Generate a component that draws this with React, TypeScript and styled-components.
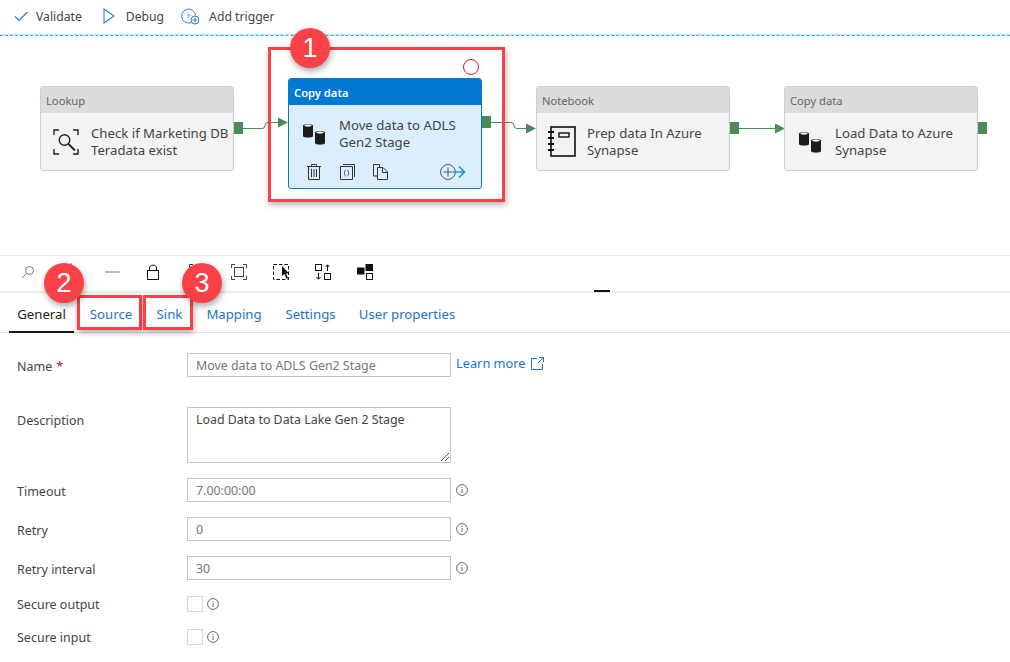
import React from 'react';
import styled, { createGlobalStyle } from 'styled-components';

const GlobalStyle = createGlobalStyle`
  html, body {
    margin: 0;
    padding: 0;
    background: #fff;
  }
  * {
    box-sizing: border-box;
  }
`;

const Page = styled.div`
  position: relative;
  width: 1010px;
  height: 662px;
  overflow: hidden;
  background: #fff;
  color: #333;
  font-family: 'Noto Sans', 'Open Sans', sans-serif;
  font-size: 12.5px;
`;

const TopBar = styled.div`
  display: flex;
  align-items: center;
  height: 36px;
  padding: 0 0 3px 14px;
  border-bottom: 1px dashed #12bce8;
  box-shadow: inset 0 -1px 0 #dedede;
`;

const TopAction = styled.div<{ $gap: number; $mr: number }>`
  display: flex;
  align-items: center;
  gap: ${(p) => p.$gap}px;
  margin-right: ${(p) => p.$mr}px;
  font-size: 12.2px;
  color: #444;
`;

const Canvas = styled.div`
  position: relative;
  height: 220px;
  border-bottom: 1px solid #e6e6e6;
`;

const Wires = styled.svg`
  position: absolute;
  left: 0;
  top: 0;
`;

const Node = styled.div<{ $x: number; $y: number; $active?: boolean }>`
  position: absolute;
  left: ${(p) => p.$x}px;
  top: ${(p) => p.$y}px;
  width: 194px;
  height: ${(p) => (p.$active ? 111 : 85)}px;
  border: 1px solid ${(p) => (p.$active ? '#0f78b8' : '#cfcfcf')};
  border-radius: 3px;
  background: ${(p) => (p.$active ? '#daeefd' : '#f3f3f3')};
  overflow: hidden;
`;

const NodeHead = styled.div<{ $active?: boolean }>`
  height: 26px;
  padding-left: 5px;
  line-height: 27px;
  font-size: 11.2px;
  font-weight: ${(p) => (p.$active ? 600 : 400)};
  background: ${(p) => (p.$active ? '#0078d4' : '#dcdcdc')};
  color: ${(p) => (p.$active ? '#fff' : '#666')};
`;

const NodeBody = styled.div`
  display: flex;
  align-items: flex-start;
`;

const NodeIcon = styled.div`
  flex: none;
  width: 50px;
  height: 44px;
  margin-top: 7px;
  display: flex;
  align-items: center;
  justify-content: center;
`;

const NodeText = styled.div`
  margin-top: 12px;
  font-size: 13.2px;
  line-height: 17px;
  color: #444;
  white-space: nowrap;
`;

const NodeTools = styled.div`
  display: flex;
  align-items: center;
  padding-left: 18px;
  margin-top: 6px;
`;

const NodeTool = styled.div`
  width: 33px;
  height: 20px;
  display: flex;
  align-items: center;
`;

const NodeToolEnd = styled.div`
  margin-left: 34px;
  display: flex;
  align-items: center;
`;

const OutPort = styled.div<{ $x: number; $y: number }>`
  position: absolute;
  left: ${(p) => p.$x}px;
  top: ${(p) => p.$y}px;
  width: 9px;
  height: 12px;
  background: #4a8c55;
`;

const ErrorRing = styled.div`
  position: absolute;
  left: 463px;
  top: 59px;
  width: 16px;
  height: 16px;
  border: 1px solid #e81123;
  border-radius: 50%;
`;

const ZoomBar = styled.div`
  position: relative;
  display: flex;
  align-items: center;
  height: 37px;
  padding: 0 0 4px 21px;
  border-bottom: 2px solid #ececec;
`;

const ZoomTool = styled.div`
  width: 42px;
  display: flex;
  align-items: center;
`;

const GripMark = styled.div`
  position: absolute;
  left: 594px;
  bottom: -1px;
  width: 16px;
  height: 2px;
  background: #111;
`;

const Tabs = styled.div`
  display: flex;
  align-items: stretch;
  height: 40px;
  padding-left: 9px;
  border-bottom: 1px solid #e3e3e3;
`;

const Tab = styled.div<{ $active?: boolean; $width: number }>`
  width: ${(p) => p.$width}px;
  height: ${(p) => (p.$active ? 40 : 39)}px;
  line-height: 43px;
  text-align: center;
  font-size: 13.2px;
  white-space: nowrap;
  color: ${(p) => (p.$active ? '#222' : '#1a73cf')};
  border-bottom: ${(p) => (p.$active ? '2px solid #1b1b1b' : 'none')};
`;

const Form = styled.div`
  padding: 20px 0 0 17px;
`;

const Row = styled.div<{ $mb: number }>`
  display: flex;
  align-items: flex-start;
  margin-bottom: ${(p) => p.$mb}px;
`;

const Label = styled.div<{ $top?: number }>`
  flex: none;
  width: 170px;
  padding-top: ${(p) => p.$top ?? 5}px;
  line-height: 17px;
  font-size: 12.5px;
  color: #444;
`;

const Required = styled.span`
  color: #a4262c;
  margin-left: 4px;
`;

const Field = styled.div<{ $tall?: boolean; $dark?: boolean }>`
  position: relative;
  flex: none;
  width: 264px;
  height: ${(p) => (p.$tall ? 56 : 24)}px;
  padding: 3px 8px;
  line-height: 18px;
  font-size: 12.4px;
  border: 1px solid #c4c4c4;
  color: ${(p) => (p.$dark ? '#444' : '#777')};
`;

const Resize = styled.svg`
  position: absolute;
  right: 0;
  bottom: 0;
`;

const Hint = styled.div<{ $ml: number; $top: number }>`
  margin-left: ${(p) => p.$ml}px;
  margin-top: ${(p) => p.$top}px;
  display: flex;
  align-items: center;
  gap: 5px;
`;

const LearnMore = styled.span`
  color: #1a73cf;
  font-size: 12.8px;
  line-height: 16px;
`;

const Check = styled.div`
  flex: none;
  width: 16px;
  height: 16px;
  border: 1px solid #d8d8d8;
`;

const RedBox = styled.div<{ $x: number; $y: number; $w: number; $h: number }>`
  position: absolute;
  left: ${(p) => p.$x}px;
  top: ${(p) => p.$y}px;
  width: ${(p) => p.$w}px;
  height: ${(p) => p.$h}px;
  border: 3px solid #fa4147;
  box-shadow: 1px 3px 6px rgba(0, 0, 0, 0.3);
`;

const Badge = styled.div<{ $x: number; $y: number }>`
  position: absolute;
  left: ${(p) => p.$x - 20}px;
  top: ${(p) => p.$y - 20}px;
  width: 40px;
  height: 40px;
  border-radius: 50%;
  background: #fa4147;
  box-shadow: 1px 3px 6px rgba(0, 0, 0, 0.35);
  color: #fff;
  font-family: 'Liberation Sans', Arial, sans-serif;
  font-size: 27px;
  line-height: 40px;
  text-align: center;
`;

const Db = () => (
  <svg width="24" height="24" viewBox="0 0 24 24">
    <path d="M1 3.5C1 1.8 11 1.8 11 3.5V14C11 16 1 16 1 14Z" fill="#1c1c1c" />
    <ellipse cx="6" cy="3.6" rx="3.6" ry="1.1" fill="#eee" />
    <path d="M13 10.5C13 8.8 23 8.8 23 10.5V21C23 23 13 23 13 21Z" fill="#1c1c1c" />
    <ellipse cx="18" cy="10.6" rx="3.6" ry="1.1" fill="#eee" />
  </svg>
);

const LookupIcon = () => (
  <svg width="26" height="26" viewBox="0 0 26 26" fill="none" stroke="#222" strokeWidth="1.4">
    <path d="M1 6V1H6M20 1H25V6M1 20V25H6M20 25H25V20" />
    <circle cx="11.5" cy="11" r="5.3" />
    <path d="M15.5 15L22 21.5" strokeWidth="1.8" />
  </svg>
);

const NotebookIcon = () => (
  <svg width="28" height="32" viewBox="0 0 28 32" fill="none" stroke="#111">
    <rect x="3" y="1" width="24" height="29" strokeWidth="1.6" />
    <rect x="11" y="7" width="10" height="4" strokeWidth="1.4" />
    <path d="M0 6H6M0 12H6M0 18H6M0 24H6" strokeWidth="1.8" />
  </svg>
);

const TrashIcon = () => (
  <svg width="14" height="16" viewBox="0 0 14 16" fill="none" stroke="#333">
    <path d="M0 2.5H14M4.5 2.5V.5H9.5V2.5M1.5 2.5V15.5H12.5V2.5M4.5 5V13M7 5V13M9.5 5V13" />
  </svg>
);

const CodeIcon = () => (
  <svg width="15" height="16" viewBox="0 0 15 16" fill="none" stroke="#333">
    <path d="M3 .5H14.5V13M.5 2.5H12.5V15.5H.5Z" />
    <path d="M5.5 6C4.5 6 5 8.8 4 9C5 9.2 4.5 12 5.5 12M7.5 6C8.5 6 8 8.8 9 9C8 9.2 8.5 12 7.5 12" strokeWidth=".9" />
  </svg>
);

const CopyIcon = () => (
  <svg width="15" height="16" viewBox="0 0 15 16" fill="none" stroke="#333">
    <path d="M.5 .5H6.5V12H.5Z" fill="#daeefd" />
    <path d="M4.5 3.5H10L14.5 8V15.5H4.5Z" fill="#daeefd" />
    <path d="M9.5 3.5V8.5H14.5" />
  </svg>
);

const AddOutIcon = () => (
  <svg width="26" height="16" viewBox="0 0 26 16" fill="none">
    <circle cx="8" cy="8" r="7.4" stroke="#555" />
    <path d="M3.5 8H12.5M8 3.5V12.5" stroke="#555" />
    <path d="M13 8H24.5M19 2.5L24.5 8L19 13.5" stroke="#1a9ac9" strokeWidth="1.6" />
  </svg>
);

const InfoIcon = () => (
  <svg width="12" height="12" viewBox="0 0 12 12" fill="none" stroke="#666">
    <circle cx="6" cy="6" r="5.4" />
    <path d="M6 5V9M6 3V4" />
  </svg>
);

const ExternalIcon = () => (
  <svg width="13" height="13" viewBox="0 0 13 13" fill="none" stroke="#1a73cf">
    <path d="M6 1.5H.5V12.5H11.5V7M8 .5H12.5V5M12.5 .5L7 6" />
  </svg>
);

const zoomIcons = [
  <svg key="search" width="14" height="14" viewBox="0 0 14 14" fill="none" stroke="#777">
    <circle cx="8.5" cy="5.5" r="4" />
    <path d="M5.5 8.5L1 13" />
  </svg>,
  <svg key="plus" width="16" height="18" viewBox="0 0 16 18" fill="none" stroke="#777">
    <path d="M0 9H16M8 0V18" />
  </svg>,
  <svg key="minus" width="15" height="14" viewBox="0 0 15 14" fill="none" stroke="#777">
    <path d="M0 7H15" />
  </svg>,
  <svg key="lock" width="12" height="16" viewBox="0 0 12 16" fill="none" stroke="#111">
    <rect x=".5" y="6.5" width="11" height="9" />
    <path d="M2.5 6.5V4C2.5 .2 9.5 .2 9.5 4V6.5" />
  </svg>,
  <svg key="fit" width="16" height="16" viewBox="0 0 16 16" fill="none" stroke="#333">
    <path d="M.5 4V.5H4M12 .5H15.5V4M.5 12V15.5H4M12 15.5H15.5V12" />
  </svg>,
  <svg key="frame" width="16" height="16" viewBox="0 0 16 16" fill="none" stroke="#444">
    <path d="M.5 4V.5H4M12 .5H15.5V4M.5 12V15.5H4M12 15.5H15.5V12" />
    <rect x="3.5" y="3.5" width="9" height="9" />
  </svg>,
  <svg key="select" width="18" height="16" viewBox="0 0 18 16" fill="none">
    <rect x=".5" y=".5" width="15" height="15" stroke="#111" strokeDasharray="3.5 2" />
    <path d="M9 2L9 12L11.5 10L13.5 15L15 14L13 9.5H16Z" fill="#111" />
  </svg>,
  <svg key="swap" width="16" height="16" viewBox="0 0 16 16" fill="none" stroke="#111">
    <rect x=".5" y=".5" width="6" height="6" />
    <rect x="9.5" y="9.5" width="6" height="6" />
    <path d="M12.5 7V1M10.5 3L12.5 .8L14.5 3M3.5 9V15M1.5 13L3.5 15.2L5.5 13" />
  </svg>,
  <svg key="layout" width="16" height="16" viewBox="0 0 16 16" fill="none" stroke="#111">
    <rect x="0" y="4" width="7" height="6" fill="#111" />
    <rect x="9" y=".5" width="6.5" height="6" fill="#111" />
    <rect x="9.5" y="9.5" width="6" height="6" />
  </svg>,
];

const tabs = [
  { name: 'General', width: 65, active: true },
  { name: 'Source', width: 74 },
  { name: 'Sink', width: 43 },
  { name: 'Mapping', width: 86 },
  { name: 'Settings', width: 67 },
  { name: 'User properties', width: 126 },
];

const App: React.FC = () => {
  return (
    <Page>
      <GlobalStyle />
      <TopBar>
        <TopAction $gap={8} $mr={21}>
          <svg width="14" height="11" viewBox="0 0 14 11" fill="none" stroke="#2b7cd3" strokeWidth="1.2">
            <path d="M1 5.5L5 9.5L13.5 1" />
          </svg>
          Validate
        </TopAction>
        <TopAction $gap={11} $mr={17}>
          <svg width="12" height="16" viewBox="0 0 12 16" fill="none" stroke="#2b7cd3" strokeWidth="1.1">
            <path d="M1 1L11 8L1 15Z" />
          </svg>
          Debug
        </TopAction>
        <TopAction $gap={9} $mr={0}>
          <svg width="19" height="17" viewBox="0 0 19 17" fill="none" stroke="#2b7cd3">
            <path d="M12 13.5A7 7 0 1 1 14.5 7" />
            <path d="M6 4.5L10.5 7.5L6 10.5Z" fill="#a9cdf0" stroke="none" />
            <circle cx="14" cy="12" r="4" fill="#fff" />
            <path d="M11.5 12H16.5M14 9.5V14.5" />
          </svg>
          Add trigger
        </TopAction>
      </TopBar>

      <Canvas>
        <Wires width="1010" height="219" fill="none">
          <g stroke="#4a8c55" strokeWidth="1">
            <path d="M243 92.5H262Q265 92.5 265 89.5Q265 86.5 268 86.5H279" />
            <path d="M491 86.5H511Q514 86.5 514 89.5Q514 92.5 517 92.5H527" />
            <path d="M739 92.5H776" />
          </g>
          <g fill="#4a8c55">
            <path d="M278 81.5L288 86.5L278 91.5Z" />
            <path d="M526 87.5L536 92.5L526 97.5Z" />
            <path d="M775 87.5L785 92.5L775 97.5Z" />
          </g>
        </Wires>

        <Node $x={40} $y={50}>
          <NodeHead>Lookup</NodeHead>
          <NodeBody>
            <NodeIcon><LookupIcon /></NodeIcon>
            <NodeText>Check if Marketing DB<br />Teradata exist</NodeText>
          </NodeBody>
        </Node>
        <OutPort $x={234} $y={86} />

        <Node $x={288} $y={42} $active>
          <NodeHead $active>Copy data</NodeHead>
          <NodeBody>
            <NodeIcon><Db /></NodeIcon>
            <NodeText>Move data to ADLS<br />Gen2 Stage</NodeText>
          </NodeBody>
          <NodeTools>
            <NodeTool><TrashIcon /></NodeTool>
            <NodeTool><CodeIcon /></NodeTool>
            <NodeTool><CopyIcon /></NodeTool>
            <NodeToolEnd><AddOutIcon /></NodeToolEnd>
          </NodeTools>
        </Node>
        <OutPort $x={482} $y={80} />

        <Node $x={536} $y={50}>
          <NodeHead>Notebook</NodeHead>
          <NodeBody>
            <NodeIcon><NotebookIcon /></NodeIcon>
            <NodeText>Prep data In Azure<br />Synapse</NodeText>
          </NodeBody>
        </Node>
        <OutPort $x={730} $y={86} />

        <Node $x={784} $y={50}>
          <NodeHead>Copy data</NodeHead>
          <NodeBody>
            <NodeIcon><Db /></NodeIcon>
            <NodeText>Load Data to Azure<br />Synapse</NodeText>
          </NodeBody>
        </Node>
        <OutPort $x={978} $y={86} />
      </Canvas>

      <ZoomBar>
        {zoomIcons.map((icon) => (
          <ZoomTool key={icon.key}>{icon}</ZoomTool>
        ))}
        <GripMark />
      </ZoomBar>

      <Tabs>
        {tabs.map((t) => (
          <Tab key={t.name} $active={t.active} $width={t.width}>{t.name}</Tab>
        ))}
      </Tabs>

      <Form>
        <Row $mb={30}>
          <Label>Name<Required>*</Required></Label>
          <Field>Move data to ADLS Gen2 Stage</Field>
          <Hint $ml={5} $top={2}>
            <LearnMore>Learn more</LearnMore>
            <ExternalIcon />
          </Hint>
        </Row>
        <Row $mb={15}>
          <Label>Description</Label>
          <Field $tall $dark>
            Load Data to Data Lake Gen 2 Stage
            <Resize width="10" height="10" viewBox="0 0 10 10" stroke="#555" fill="none">
              <path d="M1 9L9 1M5 9L9 5" />
            </Resize>
          </Field>
        </Row>
        <Row $mb={15}>
          <Label>Timeout</Label>
          <Field>7.00:00:00</Field>
          <Hint $ml={5} $top={6}><InfoIcon /></Hint>
        </Row>
        <Row $mb={15}>
          <Label>Retry</Label>
          <Field>0</Field>
          <Hint $ml={5} $top={6}><InfoIcon /></Hint>
        </Row>
        <Row $mb={16}>
          <Label>Retry interval</Label>
          <Field>30</Field>
          <Hint $ml={5} $top={6}><InfoIcon /></Hint>
        </Row>
        <Row $mb={16}>
          <Label $top={0}>Secure output</Label>
          <Check />
          <Hint $ml={4} $top={2}><InfoIcon /></Hint>
        </Row>
        <Row $mb={0}>
          <Label $top={0}>Secure input</Label>
          <Check />
          <Hint $ml={4} $top={2}><InfoIcon /></Hint>
        </Row>
      </Form>

      <ErrorRing />
      <RedBox $x={268} $y={47} $w={237} $h={155} />
      <RedBox $x={77} $y={295} $w={65} $h={35} />
      <RedBox $x={143} $y={295} $w={50} $h={35} />
      <Badge $x={310} $y={48}>1</Badge>
      <Badge $x={64} $y={283}>2</Badge>
      <Badge $x={202} $y={283}>3</Badge>
    </Page>
  );
};

export default App;
